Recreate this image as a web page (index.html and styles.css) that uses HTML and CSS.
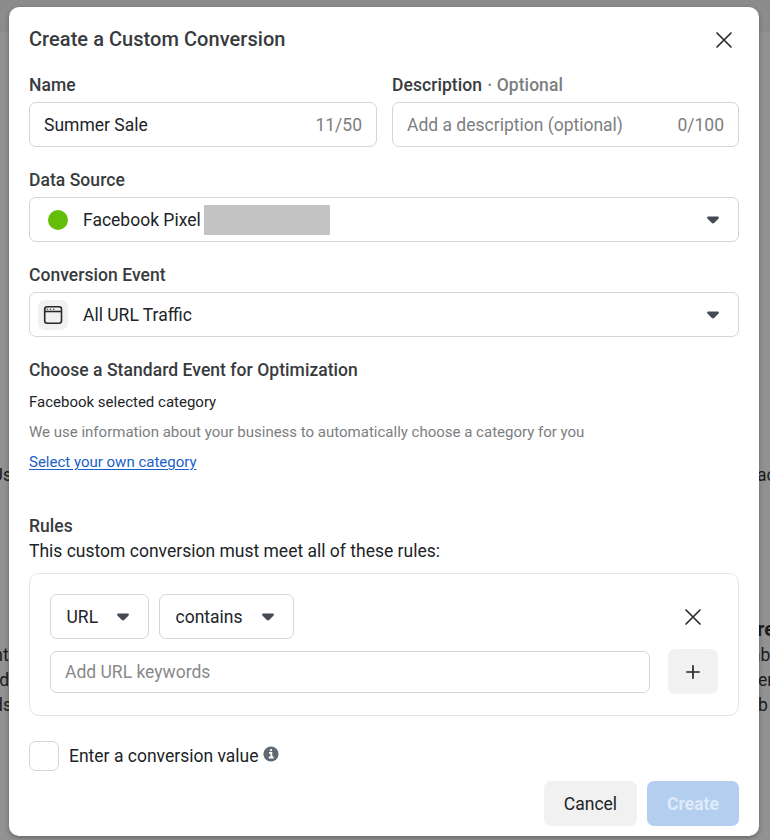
FILE: index.html
```html
<!DOCTYPE html>
<html lang="en">
<head>
<meta charset="utf-8">
<title>Create a Custom Conversion</title>
<link rel="stylesheet" href="styles.css">
</head>
<body>
<div class="page">
  <aside class="side side-left">
    <p class="side-intro">Us</p>
    <p class="peek">nte</p>
    <p class="single">d</p>
    <p>ds</p>
  </aside>
  <main class="modal">
    <header class="modal-header">
      <h1>Create a Custom Conversion</h1>
      <svg class="close" viewBox="0 0 18 18" width="18" height="18"><path d="M2 2l14 14M16 2L2 16"/></svg>
    </header>

    <div class="columns">
      <section class="field">
        <h2>Name</h2>
        <div class="control"><span class="text">Summer Sale</span><span class="text count">11/50</span></div>
      </section>
      <section class="field">
        <h2>Description <span class="muted optional">· Optional</span></h2>
        <div class="control"><span class="text muted">Add a description (optional)</span><span class="text count">0/100</span></div>
      </section>
    </div>

    <section class="field">
      <h2>Data Source</h2>
      <div class="control select">
        <span class="icon-slot"><span class="status"></span></span>
        <span class="text">Facebook Pixel</span><span class="redacted"></span>
        <svg class="caret" viewBox="0 0 12 8" width="12" height="8"><path d="M1.2.5h9.6q1.1 0 1.1 1.1 0 .6-.5 1.1L7.4 6.8q-1.4 1.3-2.8 0L.6 2.7Q.1 2.2.1 1.6.1.5 1.2.5z"/></svg>
      </div>
    </section>

    <section class="field">
      <h2>Conversion Event</h2>
      <div class="control select">
        <span class="icon-slot window-slot">
          <svg class="window" viewBox="0 0 20 20" width="20" height="20"><rect x="1.7" y="1.7" width="16.8" height="16.6" rx="2.5"/><path d="M2 6.5h16"/><path class="dots" d="M3.6 4.2h1.500M6.800 4.200h1.500M10 4.200h1.500"/></svg>
        </span>
        <span class="text">All URL Traffic</span>
        <svg class="caret" viewBox="0 0 12 8" width="12" height="8"><path d="M1.2.5h9.6q1.1 0 1.1 1.1 0 .6-.5 1.1L7.4 6.8q-1.4 1.3-2.8 0L.6 2.7Q.1 2.2.1 1.6.1.5 1.2.5z"/></svg>
      </div>
    </section>

    <section class="category">
      <h2>Choose a Standard Event for Optimization</h2>
      <p>Facebook selected category</p>
      <p class="muted">We use information about your business to automatically choose a category for you</p>
      <p><a href="#">Select your own category</a></p>
    </section>

    <section class="rules">
      <h2>Rules</h2>
      <p>This custom conversion must meet all of these rules:</p>
      <div class="rules-box">
        <div class="rule-row">
          <div class="control pick"><span class="text">URL</span><svg class="caret" viewBox="0 0 12 8" width="12" height="8"><path d="M1.2.5h9.6q1.1 0 1.1 1.1 0 .6-.5 1.1L7.4 6.8q-1.4 1.3-2.8 0L.6 2.7Q.1 2.2.1 1.6.1.5 1.2.5z"/></svg></div>
          <div class="control pick wide"><span class="text">contains</span><svg class="caret" viewBox="0 0 12 8" width="12" height="8"><path d="M1.2.5h9.6q1.1 0 1.1 1.1 0 .6-.5 1.1L7.4 6.8q-1.4 1.3-2.8 0L.6 2.7Q.1 2.2.1 1.6.1.5 1.2.5z"/></svg></div>
          <svg class="remove" viewBox="0 0 18 18" width="18" height="18"><path d="M2 2l14 14M16 2L2 16"/></svg>
        </div>
        <div class="keyword-row">
          <div class="control keywords"><span class="text">Add URL keywords</span></div>
          <button class="add" aria-label="Add"><svg viewBox="0 0 16 16" width="16" height="16"><path d="M8 1.200v13.600M1.200 8h13.600"/></svg></button>
        </div>
      </div>
    </section>

    <div class="value-row">
      <span class="checkbox"></span>
      <span>Enter a conversion value</span>
      <svg class="info" viewBox="0 0 16 16" width="16" height="16"><circle cx="8" cy="8" r="7.6"/><path d="M6 6.800h2.400v4.700M5.800 11.500h4.800"/><circle class="dot" cx="8" cy="4.100" r="1.200"/></svg>
    </div>

    <footer class="actions">
      <button class="cancel">Cancel</button>
      <button class="create">Create</button>
    </footer>
  </main>
  <aside class="side side-right">
    <p class="side-intro">ac</p>
    <p class="side-heading">re</p>
    <p class="tucked">ab</p>
    <p>er</p>
    <p>b</p>
  </aside>
</div>
</body>
</html>
```
FILE: styles.css
```css
* { box-sizing: border-box; }
body { margin: 0; }
h1, h2, p { margin: 0; }

.page {
  display: grid;
  grid-template-columns: 9px 750px 11px;
  height: 840px;
  overflow: hidden;
  background: linear-gradient(#8c8c8c 32px, #929292 32px);
  color: #212427;
  font: 400 17.5px/25px Roboto, "Liberation Sans", sans-serif;
}

.side {
  padding-top: 463px;
  color: #1b1b1b;
  white-space: nowrap;
}
.side p { display: flex; }
.side-left p { justify-content: flex-end; margin-right: -3px; }
.side-left .peek { margin-right: -9px; }
.side-left .single { margin-right: 0; }
.side .side-intro { margin-bottom: 155px; }
.side-right .side-intro { margin-bottom: 129px; }
.side-right .side-heading { height: 26px; font-size: 20px; font-weight: 700; }
.side-right p { margin-left: -1px; }
.side-right .side-intro, .side-right .side-heading { margin-left: -2px; }
.side-right .tucked { margin-left: -8px; }

.modal {
  position: relative;
  z-index: 1;
  display: flex;
  flex-direction: column;
  height: 829px;
  margin-top: 7px;
  padding: 20px 20px 10px;
  border-radius: 10px;
  background: #fff;
  box-shadow: 0 2px 5px rgba(0, 0, 0, .3);
}
.modal-header {
  display: flex;
  align-items: center;
  justify-content: space-between;
  height: 24px;
  margin-bottom: 22px;
}
h1 { font-size: 20px; font-weight: 500; letter-spacing: .05px; color: #383b3e; }
h2 { height: 24px; font-size: 17.5px; line-height: 24px; font-weight: 500; letter-spacing: .05px; color: #383b3e; }
.muted { color: #7c7e80; }
.optional { margin-left: 1px; }

.close, .remove { fill: none; stroke: #2b2e30; stroke-width: 1.7; stroke-linecap: round; }
.close { margin: 2px 6px 0 0; }

.columns { display: grid; grid-template-columns: 348px 347px; gap: 15px; }
.field { margin-bottom: 21px; }
.field h2 { margin-bottom: 5px; }
.control {
  display: flex;
  align-items: center;
  height: 45px;
  padding: 0 14px;
  border: 1px solid #d3d5d7;
  border-radius: 7px;
  background: #fff;
}
.text { padding-top: 2px; }
.count { margin-left: auto; color: #7c7e80; }
.select { padding: 0 19px 0 8px; }
.icon-slot { display: flex; align-items: center; justify-content: center; width: 30px; height: 30px; margin-right: 15px; }
.status { width: 20px; height: 20px; margin-left: 10px; border-radius: 50%; background: #63be09; }
.window-slot { border-radius: 7px; background: #f1f1f1; }
.window { fill: none; stroke: #25282b; stroke-width: 1.6; }
.window .dots { stroke-width: 1; }
.redacted { width: 126px; height: 30px; margin-left: 3px; background: #c3c3c3; }
.caret { margin: 1px 0 0 auto; fill: #454b52; }

.category p { height: 20px; margin-top: 10px; font-size: 15px; line-height: 20px; }
.category a { color: #1b5fc9; text-decoration: underline; text-underline-offset: 2px; }

.rules { margin-top: 42px; }
.rules p { height: 25px; padding-top: 1px; }
.rules-box { height: 143px; margin-top: 10px; padding: 20px; border: 1px solid #e4e5e6; border-radius: 10px; }
.rule-row { display: flex; align-items: center; gap: 10px; height: 45px; }
.pick { width: 99px; padding: 0 19px 0 15.5px; }
.pick.wide { width: 135px; }
.remove { margin: 0 16px 0 auto; }
.keyword-row { display: flex; align-items: center; justify-content: space-between; height: 45px; margin-top: 10px; }
.keywords { width: 600px; height: 42px; color: #88898b; }

button { display: flex; align-items: center; justify-content: center; height: 45px; padding: 0; border: 0; border-radius: 7px; background: #f1f1f1; color: inherit; font: inherit; }
.add { width: 50px; }
.add svg { fill: none; stroke: #25282b; stroke-width: 1.7; }

.value-row { display: flex; align-items: center; height: 30px; margin-top: 25px; }
.checkbox { width: 30px; height: 30px; margin-right: 10px; border: 1px solid #d3d5d7; border-radius: 7px; }
.info { margin: -4px 0 0 5px; fill: #606872; }
.info path { fill: none; stroke: #fff; stroke-width: 1.8; }
.info .dot { fill: #fff; }

.actions { display: flex; justify-content: flex-end; gap: 10px; margin-top: 10px; }
.actions button { padding-top: 2px; }
.cancel { width: 93px; }
.actions .create { width: 92px; background: #b3ceef; color: #deebfa; font-weight: 700; }
```
